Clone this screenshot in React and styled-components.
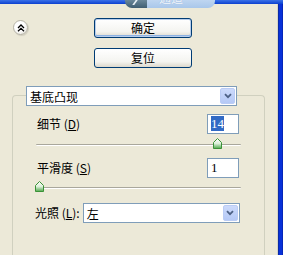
import React from 'react';
import styled, { createGlobalStyle } from 'styled-components';

const Global = createGlobalStyle`
  html, body { margin: 0; padding: 0; background: #ECE9D8; }
  body { font-family: "Noto Sans CJK SC", "Liberation Sans", sans-serif; }
`;

const Root = styled.div`
  width: 283px;
  height: 255px;
  overflow: hidden;
  background: #ECE9D8;
  display: flex;
  flex-direction: column;
  font-size: 12px;
  color: #000;
`;

const TitleStrip = styled.div`
  height: 4px;
  flex-shrink: 0;
  position: relative;
  z-index: 2;
  background: linear-gradient(#3B72E8, #0B40CF);
`;

const Tab = styled.div`
  position: absolute;
  left: 125px;
  top: 0;
  width: 90px;
  height: 8px;
  display: flex;
  overflow: hidden;
  border-radius: 0 0 7px 7px;
  .dark {
    width: 22px;
    background: linear-gradient(#6A8799, #3F5E72);
    position: relative;
  }
  .dark::after {
    content: '';
    position: absolute;
    left: 9px;
    top: 0;
    width: 2px;
    height: 5px;
    background: #E8F0F6;
    transform: skewX(-35deg);
  }
  .light {
    flex: 1;
    background: linear-gradient(#D4E4F7, #A9C7EA);
    color: #F4F8FD;
    font-size: 12px;
    line-height: 12px;
    padding: 0 0 0 12px;
    margin-top: -8px;
    height: 16px;
    box-sizing: border-box;
    padding-top: 0;
    text-shadow: 0 0 1px #8FAED4;
  }
`;

const Body = styled.div`
  flex: 1;
  display: flex;
  min-height: 0;
`;

const Main = styled.div`
  flex: 1;
  display: flex;
  flex-direction: column;
  min-width: 0;
`;

const Edge = styled.div`
  width: 6px;
  flex-shrink: 0;
  background: linear-gradient(to right, #D6D3C6 0 1px, #0A2AA8 1px 2px, #0831D9 2px 5px, #0626B8 5px);
`;

const Header = styled.div`
  display: flex;
  align-items: flex-start;
  padding: 14px 0 0 13px;
`;

const Collapse = styled.div`
  width: 15px;
  height: 15px;
  margin-top: 2px;
  border-radius: 50%;
  border: 1px solid #B5B2A6;
  box-sizing: border-box;
  background: radial-gradient(circle at 40% 35%, #FFFFFF 40%, #E4E2D8 100%);
  box-shadow: 1px 1px 1px rgba(0, 0, 0, 0.12);
  display: flex;
  align-items: center;
  justify-content: center;
`;

const ButtonCol = styled.div`
  margin-left: 66px;
  display: flex;
  flex-direction: column;
  gap: 10px;
`;

const Button = styled.div`
  width: 98px;
  height: 20px;
  box-sizing: border-box;
  border: 1px solid #003C74;
  border-radius: 3px;
  background: linear-gradient(#FFFFFF, #F4F4F0 70%, #DCD8CC);
  box-shadow: ${p => (p.$default ? 'inset 0 0 0 1px #B7CDEB, inset 0 -1px 0 1px #8DB2E3' : 'none')};
  display: flex;
  align-items: center;
  justify-content: center;
  font-size: 12px;
  line-height: 1;
`;

const Group = styled.div`
  flex: 1;
  margin: 27px 0 0 12px;
  width: 253px;
  box-sizing: border-box;
  border: 1px solid #D0D0BF;
  border-bottom: none;
  border-radius: 4px 4px 0 0;
  display: flex;
  flex-direction: column;
`;

const Combo = styled.div`
  width: ${p => p.$w}px;
  height: 20px;
  box-sizing: border-box;
  border: 1px solid #7F9DB9;
  background: #fff;
  display: flex;
  align-items: center;
  padding: 1px;
  margin: ${p => p.$m || 0};
  .txt {
    flex: 1;
    padding-left: 2px;
    font-size: 12px;
  }
`;

const ArrowBtn = styled.div`
  width: 15px;
  height: 16px;
  box-sizing: border-box;
  border: 1px solid #BACCF5;
  border-radius: 2px;
  background: linear-gradient(#CCDAFB, #B5C9F6);
  display: flex;
  align-items: center;
  justify-content: center;
`;

const Row = styled.div`
  display: flex;
  align-items: center;
  justify-content: space-between;
  margin: ${p => p.$top}px 0 0 24px;
  width: 202px;
`;

const Label = styled.span`
  font-size: 12px;
  line-height: 1;
  u { text-underline-offset: 1px; }
`;

const NumField = styled.div`
  width: 32px;
  height: 20px;
  box-sizing: border-box;
  border: 1px solid #7F9DB9;
  background: #fff;
  padding: 2px 0 0 3px;
  font-family: "Liberation Serif", serif;
  font-size: 13px;
  line-height: 14px;
  span.sel {
    background: #316AC5;
    color: #fff;
  }
`;

const Slider = styled.div`
  position: relative;
  margin: ${p => p.$top}px 0 0 23px;
  width: 205px;
  height: 12px;
`;

const Track = styled.div`
  margin-top: 6px;
  height: 1px;
  background: #A9A79C;
  border-bottom: 1px solid #FFFFFF;
  border-radius: 1px;
`;

const Thumb = styled.svg`
  position: absolute;
  top: 0;
`;

const LightRow = styled.div`
  display: flex;
  align-items: center;
  margin: 10px 0 0 22px;
  gap: 3px;
`;

function Chevron() {
  return (
    <svg width="8" height="6" viewBox="0 0 8 6">
      <path d="M1 1.2 L4 4.2 L7 1.2" fill="none" stroke="#4D6185" strokeWidth="1.8" />
    </svg>
  );
}

function DropDown({ width, margin, children }) {
  return (
    <Combo $w={width} $m={margin}>
      <span className="txt">{children}</span>
      <ArrowBtn><Chevron /></ArrowBtn>
    </Combo>
  );
}

function TrackBar({ value, min, max, top }) {
  const left = -1 + ((value - min) / (max - min)) * 192;
  const gid = `thumb${top}${value}`;
  return (
    <Slider $top={top}>
      <Track />
      <Thumb width="9" height="11" viewBox="0 0 9 11" style={{ left }}>
        <defs>
          <linearGradient id={gid} x1="0" y1="0" x2="0" y2="1">
            <stop offset="0" stopColor="#FFFFFF" />
            <stop offset="0.5" stopColor="#DDEFDA" />
            <stop offset="1" stopColor="#4FA84C" />
          </linearGradient>
        </defs>
        <path d="M0.5 4.5 L4.5 0.5 L8.5 4.5 L8.5 10.5 L0.5 10.5 Z" fill={`url(#${gid})`} stroke="#3A9237" strokeWidth="1" />
      </Thumb>
    </Slider>
  );
}

export default function App() {
  return (
    <Root>
      <Global />
      <TitleStrip>
        <Tab>
          <div className="dark" />
          <div className="light">通道</div>
        </Tab>
      </TitleStrip>
      <Body>
        <Main>
          <Header>
            <Collapse>
              <svg width="8" height="8" viewBox="0 0 8 8">
                <path d="M1 4 L4 1 L7 4 M1 7.3 L4 4.3 L7 7.3" fill="none" stroke="#000" strokeWidth="1.3" />
              </svg>
            </Collapse>
            <ButtonCol>
              <Button $default>确定</Button>
              <Button>复位</Button>
            </ButtonCol>
          </Header>
          <Group>
            <DropDown width={211} margin="-10px 0 0 13px">基底凸现</DropDown>
            <Row $top={8}>
              <Label>细节 (<u>D</u>)</Label>
              <NumField><span className="sel">14</span></NumField>
            </Row>
            <TrackBar value={14} min={1} max={15} top={4} />
            <Row $top={8}>
              <Label>平滑度 (<u>S</u>)</Label>
              <NumField>1</NumField>
            </Row>
            <TrackBar value={1} min={1} max={15} top={3} />
            <LightRow>
              <Label>光照 (<u>L</u>):</Label>
              <DropDown width={157}>左</DropDown>
            </LightRow>
          </Group>
        </Main>
        <Edge />
      </Body>
    </Root>
  );
}
